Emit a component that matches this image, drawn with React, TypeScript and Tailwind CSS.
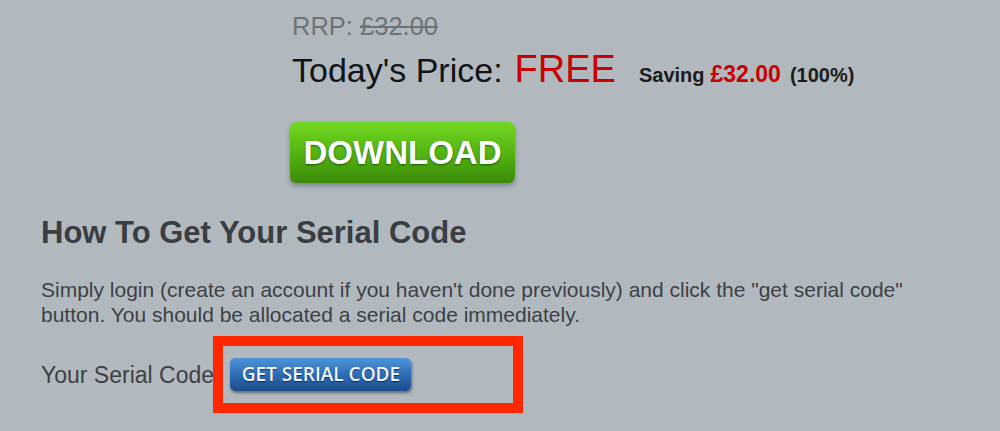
import React from "react";

export default function App() {
  return (
    <div
      className="w-[1000px] h-[431px] overflow-hidden bg-[#b1b9bf] pl-[41px]"
      style={{ fontFamily: '"Liberation Sans", Arial, sans-serif' }}
    >
      <div className="ml-[251px] pt-[12px]">
        <div className="text-[25.5px] leading-[28px] text-[#6e7377]">
          RRP: <span className="line-through">£32.00</span>
        </div>
        <div className="mt-[9px] flex items-baseline leading-[40px]">
          <span className="text-[34px] text-[#121416]">Today's Price:</span>
          <span className="ml-[12px] text-[38px] text-[#c80000]">FREE</span>
          <span className="ml-[23px] text-[20px] font-bold text-[#1c1c1c]">Saving</span>
          <span className="ml-[6px] text-[23px] font-bold text-[#c80000]">£32.00</span>
          <span className="ml-[9px] text-[20px] font-bold text-[#1c1c1c]">(100%)</span>
        </div>
        <button className="-ml-[2px] mt-[27px] flex h-[61px] w-[225px] items-center justify-center rounded-[6px] bg-gradient-to-b from-[#72d822] via-[#55b512] to-[#3c8a08] text-[33px] font-bold text-white shadow-[0_3px_5px_rgba(60,70,80,0.45)] [text-shadow:0_1px_2px_rgba(0,60,0,0.7)]">
          DOWNLOAD
        </button>
      </div>

      <h2 className="mt-[32px] text-[31px] leading-[36px] font-bold text-[#3a3e42]">
        How To Get Your Serial Code
      </h2>
      <p className="mt-[26px] w-[880px] text-[21px] leading-[25px] text-[#3d4145]">
        Simply login (create an account if you haven't done previously) and click the "get serial code" button. You should be allocated a serial code immediately.
      </p>

      <div className="relative mt-[31px] flex items-start">
        <span className="pt-[1px] text-[23px] leading-[33px] text-[#3d4145]">Your Serial Code:</span>
        <button
          className="ml-[10px] flex h-[33px] w-[181px] items-center justify-center rounded-[5px] bg-gradient-to-b from-[#4f95da] via-[#2f6db4] to-[#1c4c8c] text-[19px] font-semibold text-[#f2f6fb] shadow-[1px_2px_3px_rgba(20,30,50,0.5)] [text-shadow:0_1px_1px_rgba(0,0,40,0.6)]"
          style={{ fontFamily: '"Open Sans", sans-serif' }}
        >
          GET SERIAL CODE
        </button>
        <div className="absolute left-[172px] top-[-22px] h-[77px] w-[310px] border-[10px] border-[#ff2600]" />
      </div>
    </div>
  );
}
